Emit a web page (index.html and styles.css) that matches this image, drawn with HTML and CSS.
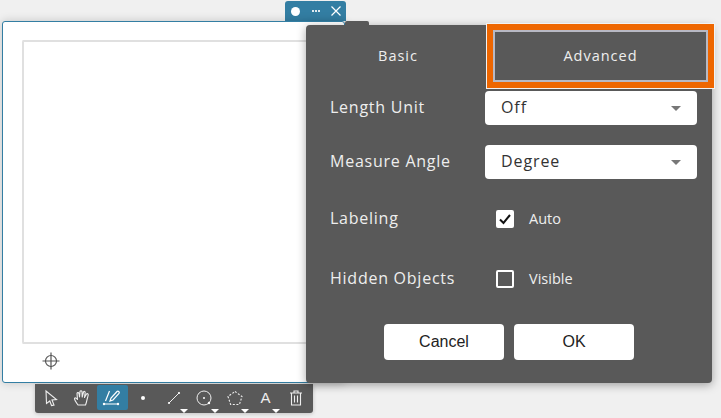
FILE: index.html
```html
<!DOCTYPE html>
<html lang="en">
<head>
    <meta charset="UTF-8">
    <title>Settings</title>
    <link rel="stylesheet" href="styles.css">
</head>
<body>
    <div class="stage">
        <div class="title-tab">
            <span class="tab-dot"></span>
            <span class="tab-more">
                <i></i><i></i><i></i>
            </span>
            <svg class="tab-close" width="12" height="12" viewBox="0 0 12 12">
                <path d="M1.5 1.5 L10.5 10.5 M10.5 1.5 L1.5 10.5" stroke="#fff" stroke-width="1.2" fill="none"/>
            </svg>
        </div>

        <div class="window">
            <div class="canvas"></div>
            <div class="status-row">
                <svg width="18" height="18" viewBox="0 0 18 18">
                    <circle cx="9" cy="9" r="5.5" stroke="#555" stroke-width="1.2" fill="none"/>
                    <path d="M9 0.5 V17.5 M0.5 9 H17.5" stroke="#555" stroke-width="1.2" fill="none"/>
                </svg>
            </div>
        </div>

        <div class="toolbar">
            <button class="tool">
                <svg width="16" height="18" viewBox="0 0 16 18"><path d="M3 2 L13.5 10.5 L9 11 L11 16 L8.5 16.5 L6.8 12 L3.5 14.5 Z" stroke="#eee" stroke-width="1.1" fill="none"/></svg>
            </button>
            <button class="tool">
                <svg width="18" height="18" viewBox="0 0 18 18"><path d="M5 16 C3.5 14 1.5 11 1.5 9.5 C2 8.5 3.2 8.8 4.5 10.5 L4 4.5 C4.2 3.3 5.6 3.3 6 4.5 L6.5 8 L7 2.5 C7.3 1.4 8.7 1.4 9 2.5 L9.2 8 L10.5 3 C11 2 12.2 2.3 12.2 3.5 L11.5 8.5 L13.5 5 C14.3 4.2 15.4 4.8 15.2 6 C14.8 8 13.8 11 13.5 13 L12.5 16 Z" stroke="#eee" stroke-width="1.1" fill="none" stroke-linejoin="round"/></svg>
            </button>
            <button class="tool tool-active">
                <svg width="20" height="18" viewBox="0 0 20 18"><path d="M7.5 2 L3.5 12 M2 15 H16 M8 12 L9 9 L15 2.5 C16 1.5 18 3 17 4.5 L11 11 Z" stroke="#fff" stroke-width="1.2" fill="none"/><circle cx="2" cy="15" r="1.2" fill="#fff"/><circle cx="16" cy="15" r="1.2" fill="#fff"/></svg>
            </button>
            <button class="tool">
                <svg width="6" height="6" viewBox="0 0 6 6"><circle cx="3" cy="3" r="2" fill="#fff"/></svg>
            </button>
            <button class="tool tool-more">
                <svg width="14" height="14" viewBox="0 0 14 14"><path d="M2 12 L12 2" stroke="#eee" stroke-width="1"/><circle cx="2" cy="12" r="1.1" fill="#fff"/><circle cx="12" cy="2" r="1.1" fill="#fff"/></svg>
            </button>
            <button class="tool tool-more">
                <svg width="16" height="16" viewBox="0 0 16 16"><circle cx="8" cy="8" r="7" stroke="#eee" stroke-width="1" fill="none"/><circle cx="8" cy="8" r="1" fill="#fff"/><circle cx="13" cy="13" r="1.2" fill="#fff"/></svg>
            </button>
            <button class="tool tool-more">
                <svg width="16" height="16" viewBox="0 0 16 16"><path d="M8 1.5 L15 6.5 L12.4 14.5 H3.6 L1 6.5 Z" stroke="#eee" stroke-width="1.1" stroke-dasharray="2 1.6" fill="none"/></svg>
            </button>
            <button class="tool tool-more tool-text">A</button>
            <button class="tool">
                <svg width="14" height="16" viewBox="0 0 14 16"><path d="M1 3 H13 M5 3 V1 H9 V3 M2.5 3 V15 H11.5 V3 M5.5 5.5 V12.5 M8.5 5.5 V12.5" stroke="#eee" stroke-width="1.1" fill="none"/></svg>
            </button>
        </div>

        <div class="panel">
            <div class="panel-tabs">
                <div class="panel-tab">Basic</div>
                <div class="panel-tab panel-tab-focus">Advanced</div>
            </div>

            <div class="row row-select">
                <span class="row-label">Length Unit</span>
                <div class="select">Off<span class="caret"></span></div>
            </div>
            <div class="row row-select">
                <span class="row-label">Measure Angle</span>
                <div class="select">Degree<span class="caret"></span></div>
            </div>
            <div class="row row-check">
                <span class="row-label">Labeling</span>
                <span class="check check-on">
                    <svg width="14" height="14" viewBox="0 0 14 14"><path d="M2 7.5 L5.5 11 L12 3" stroke="#111" stroke-width="2" fill="none"/></svg>
                </span>
                <span class="check-text">Auto</span>
            </div>
            <div class="row row-check">
                <span class="row-label">Hidden Objects</span>
                <span class="check"></span>
                <span class="check-text">Visible</span>
            </div>

            <div class="panel-buttons">
                <button class="btn">Cancel</button>
                <button class="btn">OK</button>
            </div>
        </div>
    </div>
</body>
</html>
```

FILE: styles.css
```css
* {
    box-sizing: border-box;
}

html, body {
    margin: 0;
    padding: 0;
    height: 100%;
    overflow: hidden;
}

body {
    background-color: #f0f0f0;
    font-family: "Open Sans", sans-serif;
}

.stage {
    position: relative;
    width: 721px;
    height: 418px;
    padding: 1px 0 0 2px;
}

/* blue tab on top of the window */
.title-tab {
    display: flex;
    align-items: center;
    width: 61px;
    height: 20px;
    margin-left: 283px;
    padding: 0 4px 0 6px;
    background-color: #337ea3;
    border-radius: 3px 3px 0 0;
}

.tab-dot {
    width: 9px;
    height: 9px;
    border-radius: 50%;
    background-color: #fff;
}

.tab-more {
    display: flex;
    gap: 1px;
    margin-left: 12px;
}

.tab-more i {
    width: 2px;
    height: 2px;
    background-color: #dfeaf0;
}

.tab-close {
    margin-left: 10px;
}

.window {
    width: 343px;
    height: 362px;
    padding: 18px 0 0 19px;
    background-color: #fff;
    border: 1px solid #337ea3;
    border-radius: 3px;
    box-shadow: 0 0 10px rgba(0, 0, 0, 0.18);
}

.canvas {
    height: 304px;
    border: 2px solid #e0e0e0;
    border-right: none;
    border-radius: 2px;
}

.status-row {
    display: flex;
    padding: 8px 0 0 20px;
}

.toolbar {
    display: flex;
    align-items: flex-start;
    width: 278px;
    height: 29px;
    margin: 1px 0 0 33px;
    padding: 1px 0 0 1px;
    background-color: #595959;
    border-radius: 0 0 3px 3px;
    box-shadow: 0 1px 4px rgba(0, 0, 0, 0.2);
}

.tool {
    position: relative;
    display: flex;
    align-items: center;
    justify-content: center;
    width: 30.6px;
    height: 25px;
    padding: 0;
    border: none;
    border-radius: 2px;
    background: none;
    color: #eee;
}

.tool-active {
    background-color: #337ea3;
}

.tool-text {
    font-family: "Liberation Sans", Arial, sans-serif;
    font-size: 15px;
}

.tool-more::after {
    content: "";
    position: absolute;
    right: 1px;
    bottom: -3px;
    border-left: 4px solid transparent;
    border-right: 4px solid transparent;
    border-top: 4px solid #fff;
}

/* settings dialog, sits over the window */
.panel {
    position: absolute;
    left: 306px;
    top: 25px;
    width: 406px;
    height: 358px;
    padding: 0 24px;
    background-color: #595959;
    border-radius: 4px;
    color: #eee;
    box-shadow: 0 2px 10px rgba(0, 0, 0, 0.35);
}

.panel::before {
    content: "";
    position: absolute;
    left: 39px;
    top: -4px;
    width: 24px;
    height: 8px;
    background-color: #595959;
    border-radius: 2px 2px 0 0;
}

.panel-tabs {
    position: relative;
    height: 66px;
}

.panel-tab {
    position: absolute;
    top: 0;
    left: -24px;
    width: 184px;
    height: 61px;
    display: flex;
    align-items: center;
    justify-content: center;
    font-size: 14.5px;
    letter-spacing: 1px;
}

.panel-tab-focus {
    left: 165px;
    top: 7px;
    width: 211px;
    height: 48px;
    padding-bottom: 2px;
    box-shadow: 0 0 0 2px #b8b9c4, 0 0 0 8px #ee6600, 0 0 0 9px #f2f2f2;
}

.row {
    display: flex;
    align-items: center;
    margin-right: -9px;
}

.row-select {
    height: 34px;
    margin-bottom: 20px;
}

.row-check {
    height: 34px;
    margin-top: 26px;
}

.row-select + .row-check {
    margin-top: 23px;
}

.row-label {
    flex: none;
    width: 155px;
    padding-bottom: 2px;
    font-size: 16px;
    letter-spacing: 0.75px;
}

.select {
    position: relative;
    flex: none;
    width: 212px;
    height: 34px;
    padding-left: 16px;
    line-height: 32px;
    background-color: #fff;
    border-radius: 4px;
    color: #333;
    font-size: 16px;
    letter-spacing: 0.9px;
}

.caret {
    position: absolute;
    right: 16px;
    top: 15px;
    border-left: 5px solid transparent;
    border-right: 5px solid transparent;
    border-top: 5px solid #777;
}

.check {
    display: flex;
    align-items: center;
    justify-content: center;
    width: 18px;
    height: 18px;
    margin-left: 11px;
    border: 2px solid #fff;
    border-radius: 2px;
}

.check-on {
    background-color: #fff;
}

.check-text {
    margin-left: 15px;
    padding-bottom: 2px;
    font-size: 14.5px;
}

.panel-buttons {
    display: flex;
    justify-content: center;
    gap: 10px;
    margin-top: 28px;
}

.btn {
    width: 120px;
    height: 36px;
    padding: 0;
    background-color: #fff;
    border: none;
    border-radius: 4px;
    color: #222;
    font-family: "Liberation Sans", Arial, sans-serif;
    font-size: 16px;
}
```
